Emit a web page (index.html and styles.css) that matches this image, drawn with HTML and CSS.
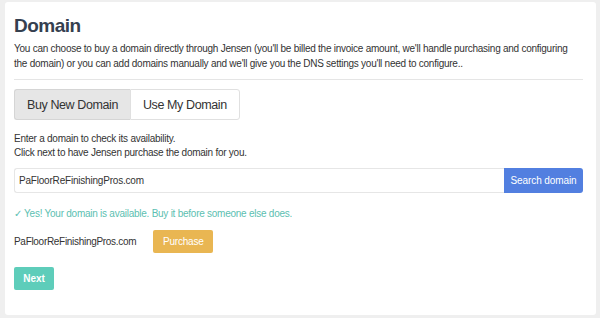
FILE: index.html
```html
<!DOCTYPE html>
<html lang="en">

<head>
  <meta charset="utf-8" />
  <title>Domain</title>
  <link rel="stylesheet" href="styles.css">
</head>

<body class="page">
  <div class="domain_card">
    <h1 class="domain_title">Domain</h1>
    <p class="domain_intro">You can choose to buy a domain directly through Jensen (you'll be billed the invoice amount, we'll handle purchasing and configuring the domain) or you can add domains manually and we'll give you the DNS settings you'll need to configure..</p>
    <hr class="domain_rule">

    <!-- tabs -->
    <div class="tab_group">
      <button class="tab_btn tab_active">Buy New Domain</button>
      <button class="tab_btn">Use My Domain</button>
    </div>

    <p class="domain_help">Enter a domain to check its availability.<br>Click next to have Jensen purchase the domain for you.</p>

    <div class="search_row">
      <input class="search_input" type="text" value="PaFloorReFinishingPros.com">
      <button class="search_btn">Search domain</button>
    </div>

    <p class="domain_ok">&#10003; Yes! Your domain is available. Buy it before someone else does.</p>

    <div class="result_row">
      <span class="result_name">PaFloorReFinishingPros.com</span>
      <button class="purchase_btn">Purchase</button>
    </div>

    <button class="next_btn">Next</button>
  </div>
</body>

</html>
```

FILE: styles.css
```css
body {
  margin: 0;
  font-family: "Liberation Sans", Arial, sans-serif;
  background-color: #efefef;
}

.page {
  padding: 2px 4px 3px 5px;
}

.domain_card {
  background-color: #ffffff;
  border-radius: 3px;
  padding: 12px 13px 25px 9px;
  color: #333;
}

.domain_title {
  margin: 0;
  font-size: 19px;
  line-height: 24px;
  font-weight: bold;
  letter-spacing: -0.5px;
  color: #35404f;
}

.domain_intro {
  margin: 3px 0 0;
  font-size: 10px;
  line-height: 15px;
  letter-spacing: -0.25px;
  color: #333;
}

.domain_rule {
  margin: 8px 0 9px;
  border: 0;
  border-top: 1px solid #e5e5e5;
}

.tab_group {
  display: flex;
}

.tab_btn {
  height: 31px;
  padding: 0 12px;
  font-family: inherit;
  font-size: 12.5px;
  letter-spacing: -0.4px;
  color: #333;
  background-color: #ffffff;
  border: 1px solid #e0e0e0;
  cursor: pointer;
}

.tab_btn:first-child {
  border-radius: 3px 0 0 3px;
  border-right: 0;
}

.tab_btn:last-child {
  border-radius: 0 3px 3px 0;
}

.tab_active {
  background-color: #e6e6e6;
  border-color: #d5d5d5;
}

.domain_help {
  margin: 12px 0 0;
  font-size: 10px;
  line-height: 14px;
  letter-spacing: -0.25px;
  color: #333;
}

.search_row {
  display: flex;
  margin-top: 8px;
}

.search_input {
  flex: 1;
  height: 25px;
  box-sizing: border-box;
  padding: 0 4px;
  font-family: inherit;
  font-size: 10px;
  letter-spacing: -0.2px;
  color: #333;
  border: 1px solid #e6e6e6;
  border-right: 0;
  border-radius: 3px 0 0 3px;
  outline: none;
}

.search_btn {
  width: 79px;
  height: 25px;
  padding: 0;
  font-family: inherit;
  font-size: 10px;
  letter-spacing: -0.1px;
  color: #ffffff;
  background-color: #527fe0;
  border: 0;
  border-radius: 0 3px 3px 0;
  cursor: pointer;
}

.domain_ok {
  margin: 14px 0 0;
  font-size: 10px;
  line-height: 14px;
  letter-spacing: -0.25px;
  color: #5cc0b1;
}

.result_row {
  display: flex;
  align-items: center;
  gap: 17px;
  margin-top: 9px;
}

.result_name {
  font-size: 10px;
  letter-spacing: -0.3px;
  color: #333;
}

.purchase_btn {
  width: 60px;
  height: 23px;
  padding: 0;
  font-family: inherit;
  font-size: 10px;
  letter-spacing: -0.2px;
  color: #ffffff;
  background-color: #e9b652;
  border: 0;
  border-radius: 2px;
  cursor: pointer;
}

.next_btn {
  display: block;
  width: 40px;
  height: 23px;
  margin-top: 14px;
  padding: 0;
  font-family: inherit;
  font-size: 10px;
  font-weight: bold;
  color: #ffffff;
  background-color: #5ecdba;
  border: 0;
  border-radius: 2px;
  cursor: pointer;
}
```
